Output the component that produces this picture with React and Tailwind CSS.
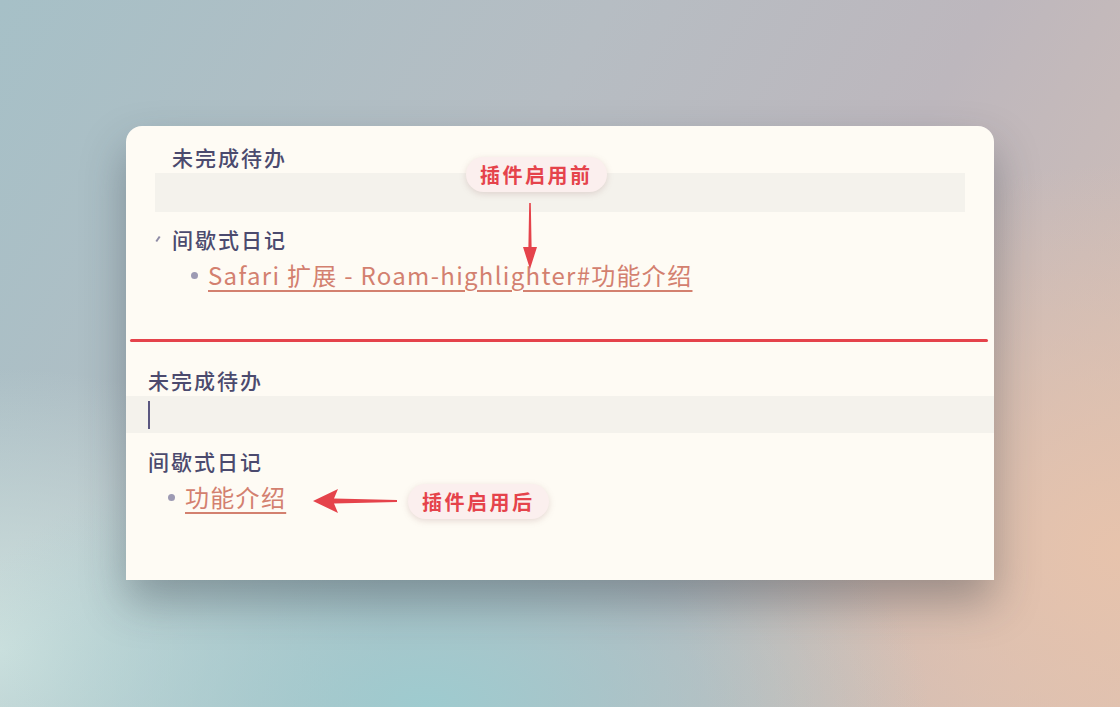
const heading = 'text-[21px] leading-[28px] tracking-[2px] font-medium text-[#4b4a6e]';
const link = 'text-[24px] leading-[34px] tracking-[1.3px] text-[#d3806f] underline decoration-2 underline-offset-[5px]';

const Dot = () => <span className="w-[7px] h-[7px] rounded-full bg-[#9d9ab3] shrink-0" />;

const Label = ({ children, className }) => (
  <div
    className={`absolute h-[35px] px-[14px] flex items-center rounded-full bg-[#fbefee] shadow-[0_2px_6px_rgba(160,120,120,0.25)] text-[20px] font-bold tracking-[2.5px] text-[#e5434b] ${className}`}
  >
    {children}
  </div>
);

const DownArrow = ({ className }) => (
  <svg className={`absolute ${className}`} width="20" height="66" viewBox="0 0 20 66">
    <path d="M9.2 0 L10.8 0 L11.6 44 L17 44 L10 66 L3 44 L8.4 44 Z" fill="#e5434b" />
  </svg>
);

const LeftArrow = ({ className }) => (
  <svg className={`absolute ${className}`} width="84" height="26" viewBox="0 0 84 26">
    <path d="M0 13 L25 1 L21 10.5 L84 12 L84 14 L21 15.5 L25 25 Z" fill="#e5434b" />
  </svg>
);

export default function App() {
  return (
    <div
      className="w-[1120px] h-[707px] pt-[126px] pl-[126px] overflow-hidden bg-[radial-gradient(ellipse_45%_40%_at_38%_100%,#9ecbcf_0%,transparent_100%),radial-gradient(ellipse_40%_55%_at_100%_78%,#e7c3ac_0%,transparent_100%),radial-gradient(ellipse_35%_40%_at_0%_92%,#d0e2df_0%,transparent_100%),linear-gradient(120deg,#a6c0c7_0%,#b6bdc3_40%,#bdb7bd_65%,#d8c0b4_100%)]"
      style={{ fontFamily: '"Noto Sans CJK SC", "Noto Sans", sans-serif' }}
    >
      <div className="relative w-[868px] h-[454px] bg-[#fefbf4] rounded-t-[16px] shadow-[0_22px_44px_rgba(40,50,60,0.35)]">
        {/* before */}
        <div className="pt-[17px] px-[29px]">
          <div className={`pl-[17px] ${heading}`}>未完成待办</div>
          <div className="mt-[2px] h-[39px] bg-[#f4f2ec]" />
          <div className="mt-[13px] flex items-center">
            <span className="w-[17px] flex items-center">
              <span className="block w-[2px] h-[6px] bg-[#8f8ca6] rotate-[35deg] ml-[2px]" />
            </span>
            <span className={heading}>间歇式日记</span>
          </div>
          <div className="mt-[5px] pl-[36px] flex items-center gap-[10px]">
            <Dot />
            <span className={link}>Safari 扩展 - Roam-highlighter#功能介绍</span>
          </div>
        </div>

        <div className="mt-[47px] ml-[4px] w-[858px] h-[3px] rounded-full bg-[#e5434b]" />

        {/* after */}
        <div className="mt-[24px]">
          <div className={`px-[22px] ${heading}`}>未完成待办</div>
          <div className="mt-[2px] h-[37px] bg-[#f4f2ec] px-[22px] flex items-center">
            <span className="block w-[2px] h-[28px] bg-[#5a5780]" />
          </div>
          <div className={`mt-[14px] px-[22px] ${heading}`}>间歇式日记</div>
          <div className="mt-[5px] pl-[42px] flex items-center gap-[10px]">
            <Dot />
            <span className={link}>功能介绍</span>
          </div>
        </div>

        <Label className="left-[340px] top-[31px]">插件启用前</Label>
        <DownArrow className="left-[394px] top-[77px]" />
        <LeftArrow className="left-[187px] top-[362px]" />
        <Label className="left-[282px] top-[358px]">插件启用后</Label>
      </div>
    </div>
  );
}
